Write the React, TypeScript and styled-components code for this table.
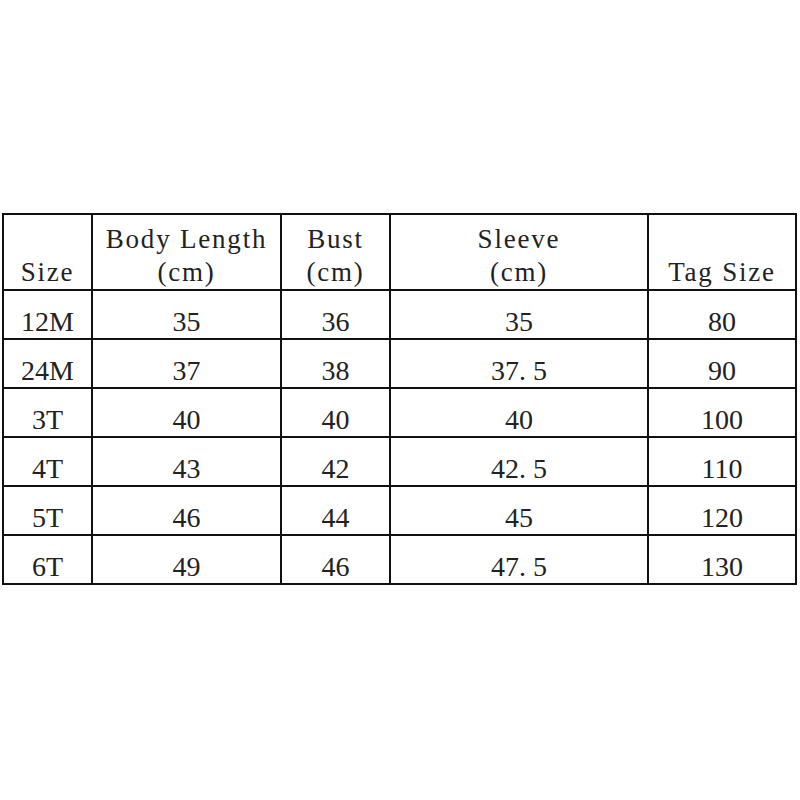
import { FC } from 'react'
import styled, { createGlobalStyle } from 'styled-components'

const GlobalStyle = createGlobalStyle`
  html, body {
    margin: 0;
    padding: 0;
    background: #ffffff;
  }
`

interface Row {
  size: string
  length: string
  bust: string
  sleeve: string
  tag: string
}

const rows: Row[] = [
  { size: '12M', length: '35', bust: '36', sleeve: '35', tag: '80' },
  { size: '24M', length: '37', bust: '38', sleeve: '37.5', tag: '90' },
  { size: '3T', length: '40', bust: '40', sleeve: '40', tag: '100' },
  { size: '4T', length: '43', bust: '42', sleeve: '42.5', tag: '110' },
  { size: '5T', length: '46', bust: '44', sleeve: '45', tag: '120' },
  { size: '6T', length: '49', bust: '46', sleeve: '47.5', tag: '130' },
]

const headers: string[][] = [
  ['Size'],
  ['Body Length', '(cm)'],
  ['Bust', '(cm)'],
  ['Sleeve', '(cm)'],
  ['Tag Size'],
]

const App: FC = () => {
  return (
    <Page>
      <GlobalStyle />
      <Chart>
        {headers.map((lines, i) => (
          <HeadCell key={i}>
            {lines.map((line) => (
              <HeadLine key={line}>{line}</HeadLine>
            ))}
          </HeadCell>
        ))}
        {rows.map((row) =>
          [row.size, row.length, row.bust, row.sleeve.replace('.', '. '), row.tag].map((value, i) => (
            <Cell key={`${row.size}-${i}`}>{value}</Cell>
          ))
        )}
      </Chart>
    </Page>
  )
}

export default App

const Page = styled.div`
  width: 800px;
  height: 800px;
  padding: 213px 0 0 2px;
  box-sizing: border-box;
  background: #ffffff;
`

const Chart = styled.div`
  display: grid;
  grid-template-columns: 89px 189px 109px 258px 148px;
  grid-template-rows: 76px repeat(6, 49px);
  width: max-content;
  border-top: 2px solid #111111;
  border-left: 2px solid #111111;
  font-family: "Liberation Serif", serif;
  color: #222222;
`

const Cell = styled.div`
  display: flex;
  align-items: flex-end;
  justify-content: center;
  border-right: 2px solid #111111;
  border-bottom: 2px solid #111111;
  padding-bottom: 0;
  font-size: 28px;
  line-height: 32px;
  white-space: pre;
`

const HeadCell = styled(Cell)`
  flex-direction: column;
  align-items: center;
  justify-content: flex-end;
  padding-bottom: 0;
`

const HeadLine = styled.span`
  display: block;
  font-size: 27px;
  line-height: 33px;
  letter-spacing: 1.8px;
  white-space: pre;
`
